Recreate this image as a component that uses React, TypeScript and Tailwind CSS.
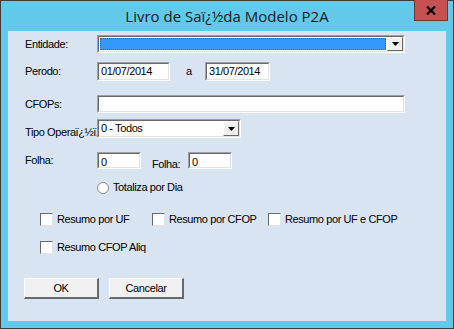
import React from 'react';

const font = { fontFamily: '"Liberation Sans", Arial, sans-serif', letterSpacing: '-0.4px' };

const Sunken: React.FC<{ className?: string; children?: React.ReactNode }> = ({ className = '', children }) => (
  <div className={`border-t border-l border-t-[#a0a0a0] border-l-[#a0a0a0] border-b border-r border-b-white border-r-white ${className}`}>
    <div className="h-full w-full border-t border-l border-t-[#696969] border-l-[#696969] border-b border-r border-b-[#e3e3e3] border-r-[#e3e3e3] bg-white flex items-center overflow-hidden">
      {children}
    </div>
  </div>
);

const Arrow = () => (
  <div className="w-[16px] h-full bg-[#f0f0f0] border-t border-l border-t-white border-l-white border-b border-r border-b-[#696969] border-r-[#696969] flex items-center justify-center">
    <svg width="7" height="4" viewBox="0 0 7 4"><path d="M0 0h7L3.5 4z" fill="#000" /></svg>
  </div>
);

const Check: React.FC<{ label: string; w?: string }> = ({ label, w = 'w-[112px]' }) => (
  <div className={`flex items-center shrink-0 ${w}`}>
    <div className="w-[13px] h-[13px] shrink-0 bg-white border-t border-l border-t-[#696969] border-l-[#696969] border-b border-r border-b-[#e3e3e3] border-r-[#e3e3e3]" />
    <span className="ml-[4px] whitespace-nowrap">{label}</span>
  </div>
);

const Btn: React.FC<{ label: string }> = ({ label }) => (
  <div className="w-[75px] h-[21px] bg-[#f0f0f0] border-t border-l border-t-white border-l-white border-b-2 border-r-2 border-b-[#696969] border-r-[#696969] flex items-center justify-center">
    {label}
  </div>
);

export default function App() {
  return (
    <div className="w-[454px] h-[329px] bg-[#62c9ea] border border-[#3c3c3c] flex flex-col" style={font}>
      {/* title bar */}
      <div className="h-[30px] relative flex items-center justify-center">
        <span className="text-[15px] text-[#1b1b1b] mt-[1px]" style={{ fontFamily: '"Open Sans", "Noto Sans", sans-serif', letterSpacing: '0' }}>
          Livro de Saï¿½da Modelo P2A
        </span>
        <div className="absolute right-[5px] top-[-1px] w-[34px] h-[21px] bg-[#c75050] border border-[#6e3535] border-t-0 flex items-center justify-center">
          <svg width="10" height="9" viewBox="0 0 10 9"><path d="M1 0.5L9 8.5M9 0.5L1 8.5" stroke="#000" strokeWidth="2.2" /></svg>
        </div>
      </div>

      {/* client area */}
      <div className="mx-[7px] h-[290px] bg-[#d8e4f1] flex flex-col pl-[17px] text-[11px] text-black">
        <div className="mt-[4px] h-[18px] flex items-center">
          <span className="w-[72px]">Entidade:</span>
          <Sunken className="w-[308px] h-[18px]">
            <div className="flex-1 h-full p-[1px]">
              <div className="h-full bg-[#3399ff] border border-dotted border-[#8a5a00]" />
            </div>
            <Arrow />
          </Sunken>
        </div>

        <div className="mt-[9px] h-[19px] flex items-center">
          <span className="w-[72px]">Perodo:</span>
          <Sunken className="w-[73px] h-[19px]"><span className="pl-[2px]">01/07/2014</span></Sunken>
          <span className="ml-[16px] w-[19px]">a</span>
          <Sunken className="w-[65px] h-[19px]"><span className="pl-[2px]">31/07/2014</span></Sunken>
        </div>

        <div className="mt-[14px] h-[18px] flex items-center">
          <span className="w-[72px]">CFOPs:</span>
          <Sunken className="w-[308px] h-[18px]" />
        </div>

        <div className="mt-[6px] h-[19px] flex items-center">
          <span className="w-[72px] shrink-0 overflow-hidden whitespace-nowrap mt-[8px]">Tipo Operaï¿½ï¿½o:</span>
          <Sunken className="w-[144px] h-[19px]">
            <span className="flex-1 pl-[2px]">0 - Todos</span>
            <Arrow />
          </Sunken>
        </div>

        <div className="mt-[14px] h-[17px] flex items-center">
          <span className="w-[72px]">Folha:</span>
          <Sunken className="w-[44px] h-[17px]"><span className="pl-[2px] self-start">0</span></Sunken>
          <span className="ml-[11px] w-[36px] mt-[7px]">Folha:</span>
          <Sunken className="w-[44px] h-[17px]"><span className="pl-[2px] self-start">0</span></Sunken>
        </div>

        <div className="mt-[12px] h-[13px] flex items-center pl-[72px]">
          <div className="w-[12px] h-[12px] rounded-full bg-white border border-[#8a8a8a]" />
          <span className="ml-[4px]">Totaliza por Dia</span>
        </div>

        <div className="mt-[19px] h-[13px] flex items-center pl-[15px]">
          <Check label="Resumo por UF" />
          <Check label="Resumo por CFOP" w="w-[116px]" />
          <Check label="Resumo por UF e CFOP" />
        </div>

        <div className="mt-[15px] h-[13px] flex items-center pl-[15px]">
          <Check label="Resumo CFOP Aliq" />
        </div>

        <div className="mt-[24px] flex gap-[10px] -ml-[1px]">
          <Btn label="OK" />
          <Btn label="Cancelar" />
        </div>
      </div>
    </div>
  );
}
